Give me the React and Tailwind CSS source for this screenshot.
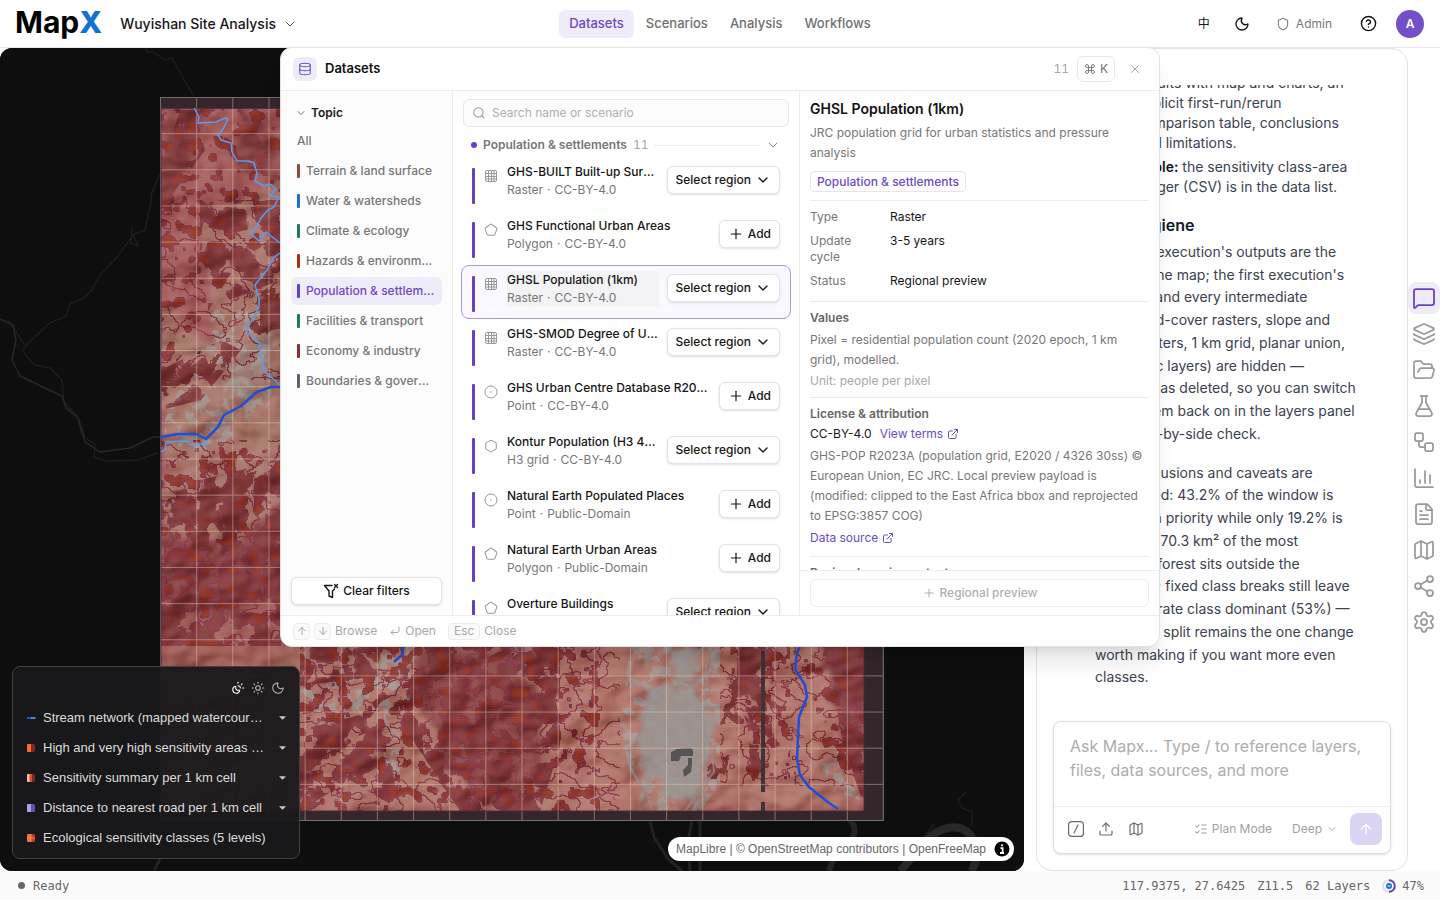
import React from "react";
import {
  ChevronDown, Database, Search, X, Moon, Shield, CircleHelp, Plus, Pentagon, Hexagon,
  ExternalLink, ArrowUp, ArrowDown, CornerDownLeft, MessageSquare, Layers, FolderOpen, FlaskConical, Workflow,
  BarChart3, FileText, Map as MapIcon, Share2, Settings, Upload, ListChecks, Sun, SunMoon, Command,
} from "lucide-react";

const TOPICS = [
  ["Terrain & land surface", "bg-[#8d4b42]"],
  ["Water & watersheds", "bg-[#1a6fd4]"],
  ["Climate & ecology", "bg-[#1f7a63]"],
  ["Hazards & environmental risk", "bg-[#9c3216]"],
  ["Population & settlements", "bg-[#6a3fc0]"],
  ["Facilities & transport", "bg-[#1f7a63]"],
  ["Economy & industry", "bg-[#84302c]"],
  ["Boundaries & governance", "bg-[#5b6070]"],
];

const DATASETS = [
  ["GHS-BUILT Built-up Surface", "Raster", "CC-BY-4.0", "grid", true],
  ["GHS Functional Urban Areas", "Polygon", "CC-BY-4.0", "poly", false],
  ["GHSL Population (1km)", "Raster", "CC-BY-4.0", "grid", true],
  ["GHS-SMOD Degree of Urbanisation", "Raster", "CC-BY-4.0", "grid", true],
  ["GHS Urban Centre Database R2024A", "Point", "CC-BY-4.0", "point", false],
  ["Kontur Population (H3 400m)", "H3 grid", "CC-BY-4.0", "hex", true],
  ["Natural Earth Populated Places", "Point", "Public-Domain", "point", false],
  ["Natural Earth Urban Areas", "Polygon", "Public-Domain", "poly", false],
  ["Overture Buildings", "Polygon", "ODbL-1.0", "poly", true],
];

const LEGEND = [
  ["Stream network (mapped watercour…", "stream", true],
  ["High and very high sensitivity areas …", "high", true],
  ["Sensitivity summary per 1 km cell", "summary", true],
  ["Distance to nearest road per 1 km cell", "distance", true],
  ["Ecological sensitivity classes (5 levels)", "classes", false],
];

const RAIL = [
  ["Layers", Layers], ["Files", FolderOpen], ["Lab", FlaskConical], ["Workflow", Workflow], ["Charts", BarChart3],
  ["Documents", FileText], ["Maps", MapIcon], ["Share", Share2], ["Settings", Settings],
];

function DatasetIcon({ kind }) {
  const cls = "size-[14px] text-[#999]";
  if (kind === "grid")
    return (
      <svg viewBox="0 0 14 14" className={cls} fill="none" stroke="currentColor" strokeWidth="1">
        <rect x="1.5" y="1.5" width="11" height="11" rx="1.5" />
        <path d="M4.5 1.5v11M7.5 1.5v11M10 1.5v11M1.5 4.5h11M1.5 7.5h11M1.5 10h11" />
      </svg>
    );
  if (kind === "poly") return <Pentagon className={cls} strokeWidth={1.75} />;
  if (kind === "hex") return <Hexagon className={cls} strokeWidth={1.75} />;
  return (
    <svg viewBox="0 0 14 14" className={cls} fill="none" stroke="currentColor">
      <circle cx="7" cy="7" r="6" />
      <circle cx="7" cy="7" r="0.8" fill="currentColor" stroke="none" />
    </svg>
  );
}

function Swatch({ kind }) {
  return (
    <svg viewBox="0 0 10 10" className="size-[10px] shrink-0">
      {kind === "stream" && <><path d="M1 5h5" stroke="#1d4fe0" strokeWidth="2" /><path d="M5 5h4.500" stroke="#5fa8f5" strokeWidth="1.500" /></>}
      {kind === "high" && <><rect x="1" y="1" width="8" height="8" rx="1.500" fill="#7c2a22" /><path d="M2 1h3v8H2a1 1 0 0 1-1-1V2a1 1 0 0 1 1-1z" fill="#fb6a32" /></>}
      {kind === "summary" && <><rect x="1" y="1" width="8" height="8" rx="1.500" fill="#7c2a22" /><path d="M3 1h3v8H3z" fill="#d8502a" /><path d="M2 1h1.500v8H2a1 1 0 0 1-1-1V2a1 1 0 0 1 1-1z" fill="#efc4b4" /></>}
      {kind === "distance" && <><rect x="1" y="1" width="8" height="8" rx="1.500" fill="#5f4fb0" /><path d="M2 1h3v8H2a1 1 0 0 1-1-1V2a1 1 0 0 1 1-1z" fill="#aaa2dc" /></>}
      {kind === "classes" && <><rect x="1" y="1" width="8" height="8" rx="1.500" fill="#c63d1c" /><path d="M2 1h3v8H2a1 1 0 0 1-1-1V2a1 1 0 0 1 1-1z" fill="#fb6a32" /><path d="M1 5h8M5 1v8" stroke="#e8b09a" strokeWidth="0.600" /></>}
    </svg>
  );
}

const STEP = 36.15;
const COLS = Array.from({ length: 21 }, (_, i) => 160.5 + i * STEP);
const ROWS = Array.from({ length: 21 }, (_, i) => 97.5 + i * STEP);

function MapCanvas() {
  return (
    <svg viewBox="0 48 1024 823" preserveAspectRatio="xMidYMid slice" className="block h-full w-full" aria-label="Map">
      <defs>
        <clipPath id="data"><rect x="161" y="108" width="703" height="703" /></clipPath>
        <filter id="relief" x="0" y="0" width="1" height="1" colorInterpolationFilters="sRGB">
          <feTurbulence type="fractalNoise" baseFrequency="0.018 0.024" numOctaves="3" seed="11" result="n" />
          <feDiffuseLighting in="n" surfaceScale="12" diffuseConstant="0.680" lightingColor="#ffffff">
            <feDistantLight azimuth="225" elevation="52" />
          </feDiffuseLighting>
        </filter>
        <filter id="soft" x="-0.2" y="-0.2" width="1.4" height="1.4" colorInterpolationFilters="sRGB">
          <feTurbulence type="fractalNoise" baseFrequency="0.04" numOctaves="4" seed="4" />
          <feDisplacementMap in="SourceGraphic" scale="34" xChannelSelector="R" yChannelSelector="G" />
          <feGaussianBlur stdDeviation="2.500" />
        </filter>
        <filter id="rough" x="-0.2" y="-0.2" width="1.4" height="1.4" colorInterpolationFilters="sRGB">
          <feTurbulence type="fractalNoise" baseFrequency="0.06" numOctaves="4" seed="21" />
          <feDisplacementMap in="SourceGraphic" scale="30" xChannelSelector="R" yChannelSelector="G" />
        </filter>
        <filter id="dense" x="0" y="0" width="1" height="1" colorInterpolationFilters="sRGB">
          <feTurbulence type="fractalNoise" baseFrequency="0.045 0.04" numOctaves="4" seed="8" />
          <feColorMatrix values="0 0 0 0 0  0 0 0 0 0  0 0 0 0 0  28 0 0 0 -13.800" result="t" />
          <feMorphology in="t" operator="dilate" radius="1" result="d" />
          <feComposite in="d" in2="t" operator="out" result="edge" />
          <feFlood floodColor="#7f3838" /><feComposite in2="t" operator="in" result="fill" />
          <feFlood floodColor="#7c2f40" /><feComposite in2="edge" operator="in" result="line" />
          <feMerge result="m"><feMergeNode in="fill" /><feMergeNode in="line" /></feMerge>
          <feComposite in="m" in2="SourceAlpha" operator="in" />
        </filter>
        <filter id="specks" x="0" y="0" width="1" height="1" colorInterpolationFilters="sRGB">
          <feTurbulence type="fractalNoise" baseFrequency="0.08" numOctaves="4" seed="31" />
          <feColorMatrix values="0 0 0 0 0  0 0 0 0 0  0 0 0 0 0  0 40 0 0 -25" result="t" />
          <feMorphology in="t" operator="dilate" radius="1" result="d" />
          <feComposite in="d" in2="t" operator="out" result="edge" />
          <feFlood floodColor="#8f3427" /><feComposite in2="t" operator="in" result="fill" />
          <feFlood floodColor="#7a3348" /><feComposite in2="edge" operator="in" result="line" />
          <feMerge result="m"><feMergeNode in="line" /><feMergeNode in="fill" /></feMerge>
          <feComposite in="m" in2="SourceAlpha" operator="in" />
        </filter>
        <filter id="contour" x="0" y="0" width="1" height="1" colorInterpolationFilters="sRGB">
          <feTurbulence type="fractalNoise" baseFrequency="0.035 0.045" numOctaves="5" seed="52" />
          <feColorMatrix values="0 0 0 0 0  0 0 0 0 0  0 0 0 0 0  0 0 60 0 -33" result="t" />
          <feMorphology in="t" operator="dilate" radius="0.6" result="d" />
          <feComposite in="d" in2="t" operator="out" result="edge" />
          <feFlood floodColor="#83313d" /><feComposite in2="edge" operator="in" result="line" />
          <feComposite in="line" in2="SourceAlpha" operator="in" />
        </filter>
        <filter id="haze" x="0" y="0" width="1" height="1" colorInterpolationFilters="sRGB">
          <feTurbulence type="fractalNoise" baseFrequency="0.09" numOctaves="4" seed="15" />
          <feColorMatrix values="0 0 0 0 0.620  0 0 0 0 0.590  0 0 0 0 0.570  0 0 9 0 -4.400" result="t" />
          <feComposite in="t" in2="SourceAlpha" operator="in" />
        </filter>
      </defs>

      <rect x="0" y="48" width="1024" height="823" fill="#0e0e0f" />
      <g fill="none" stroke="#1d1d1f" strokeWidth="1.500">
        <path d="M146 48l1 4h6l12 8 7-2 10 18 8 14 4 7M160 174l-8 18-1 10-6 28-12 5 5 11-7-3 1-15M131 238l-13 18-18 19-9 16-7 7-14 6-4 12-16 7-26 24 0 6 10 12 16 3 12 12 2 22 14 15 7 20 10 8-1 12 12 4 32-1 20-7M8 320l16 24" />
        <path d="M0 319l13 6 3 15-4 20 8 16 25 12 17 8 4 12 12 10 2 8 5 16 15 10 30-4 23-11h7" stroke="#28282a" />
        <path d="M154 871l6-12M650 821l4 16 14 22 14 12M692 821l-4 20 2 30M700 821l0 50" stroke="#222225" strokeWidth="3" />
        <path d="M842 813c12 8 16 16 10 26M833 860l-4 11" stroke="#242427" strokeWidth="6" />
        <path d="M900 871c16-16 24-36 44-42s30 6 32 20-2 14-4 22" stroke="#28282b" strokeWidth="8" />
        <path d="M926 834l8-10M966 792l-8 8 4 8 10 4 0 14" />
      </g>

      <rect x="160" y="97" width="723" height="724" fill="#34262a" />
      <g clipPath="url(#data)">
        <rect x="161" y="108" width="703" height="703" fill="#a25b59" />
        <g filter="url(#soft)">
          <path d="M205 220L300 170V560L161 530V300L210 340Z" fill="#a57266" />
          <path d="M280 640H560L590 811H300L280 760Z" fill="#aa7165" />
          <path d="M540 640H864V811H560Z" fill="#ad7267" />
          <path d="M161 600h60l80 40-60 60H161Z" fill="#9f5d57" />
          <path d="M161 530l60 20 60-40v80l-60 30-60-10Z" fill="#874243" />
          <path d="M400 650l100 0 40 60-10 100-60-10-50-100Z" fill="#8a4543" />
          <path d="M820 640h50v80l-20 50-16-60Z" fill="#823f40" />
          <path d="M161 140l30-32h20l-30 70-20 30Z" fill="#803a3a" />
          <path d="M230 110l50 20v60l-40-30Z" fill="#874142" />
        </g>
        <g filter="url(#soft)" fill="#9e9793">
          <path d="M255 300l12-6 4 80-30 26-14-6 24-50Z" opacity="0.400" />
        </g>
        <g filter="url(#haze)" opacity="0.800">
          <path d="M215 310h60v90l-60 50h-50v-30Z" />
          <path d="M630 645h90v140l-20 26h-60l-20-80Z" />
          <path d="M300 690l90-45h20v60l-90 20Z" />
          <path d="M400 650v130h-16V680ZM820 760l20-10 20 50-30-10Z" />
        </g>
        <g filter="url(#dense)">
          <path d="M161 480h40l80-20v186h-120ZM161 160l20-50h14l10 40-44 60ZM161 370l60-30 20 10-40 50-40 10Z" />
          <path d="M400 646h160v100l-20 65h-80l-60-90ZM300 646h100l-20 30-80 10ZM824 646h40v160l-20-60Z" />
          <path d="M738 646h34v140h-20l-4-60-12-30ZM200 200h80v80l-50 20-30-40ZM260 300h20v40h-20ZM300 730l80-20 20 100-50-30-50 31Z" />
        </g>
        <g filter="url(#contour)">
          <path d="M161 200h119v180H161ZM161 440h119v206H161ZM300 646h320v165H300ZM720 646h144v140H720Z" />
        </g>
        <g filter="url(#specks)">
          <path d="M161 108h119v130l-40 20-60 100-19 20ZM161 440h119v206H161Z" />
          <path d="M300 646h300v165H300ZM730 646h60v140h-50ZM800 650h64v160l-40-60Z" />
        </g>
        <g filter="url(#rough)" fill="#7a3432">
          <path d="M161 386l40-24 38-12-30 22-48 22ZM198 500l30-14 26-24 2 20-26 18-20 8v54l-14-20Z" />
          <path d="M260 300l20-10v24l-16 22-10-4Z" />
          <path d="M710 780l12-22 12-4-16 26ZM722 720l12-40 14 -10-12 50Z" />
        </g>
        <rect x="161" y="108" width="703" height="703" filter="url(#relief)" opacity="0.800" className="mix-blend-soft-light" />
        <g filter="url(#soft)" fill="#9b9795" opacity="0.850">
          <path d="M648 692l40-8 22 30-4 60-12 30-24-4-26-26-4-50Z" />
          <path d="M668 652l38-6-12 32-28-4Z" />
        </g>
        <g fill="#555457"><path d="M671 752l6-3 14 -1 2 2v6l-12 0-2 5h-8ZM688 758h4v6l-1 8-7 5-1-7 5-5ZM695 646l4 3 5-3Z" /></g>
        <g fill="none" stroke="#8f8f93" strokeWidth="2" opacity="0.700">
          <path d="M716 646l-10 40-4 36 10 30 2 20-14 18-14 20-2 7M712 646l-8 30-10 10h-30l-14 14-8 30-10 16-2 22 16 24 6 17M704 720l2 60-12 30" />
        </g>
        <path d="M763 651v141M763 802v9" stroke="#413236" strokeWidth="4" />
      </g>
      <g stroke="#ecd3bd" strokeWidth="1" opacity="0.440">
        {COLS.map((x) => <path key={x} d={`M${x} 97V821`} />)}
        {ROWS.map((y) => <path key={y} d={`M160 ${y}H883`} />)}
      </g>
      <path d="M160.500 97.500H883V820.500H160.500Z" fill="none" stroke="#6a6a72" opacity="0.700" />
      <path d="M161 108.500H864V811H161Z" fill="none" stroke="#3c2a4c" opacity="0.800" />
      <g fill="none" strokeLinejoin="round">
        <path d="M194 108l5 9-1 6 18-1 9-4 3 1-5 10-5 6 3 5 10 3 1 9 5 9h11l6 2 3 10-2 8 9 5 6-2 6 5-6 7 9 1-5 10-6 3-7 8-4 8-7 7 9 8 7-9 18 14M280 253l-6 4-7 13-12 15 4 14 0 8-13 24 13 12 5 28 16 14M161 452l4-3 1-7 20-1 5 4 10-1 4 1 2-6" stroke="#5a9df0" strokeWidth="1.500" />
        <path d="M161 437l17-3 18 0 10 5 12-12 6-12 17-9 16-14 14-5h10M404 646l-2 9-8 7M800 646l-3 7-2 16 10 16 2 12-8 20-2 42 3 16 9 12 20 16 9 6" stroke="#1f4fd8" strokeWidth="2.500" />
      </g>
    </svg>
  );
}

function Legend() {
  return (
    <section aria-label="Legend" className="absolute bottom-3 left-3 flex w-72 flex-col rounded-lg border border-[#414143] bg-[#19191b]/95 px-3 pt-3 pb-[5px] font-['Liberation_Sans',sans-serif] text-[13px] text-[#dcdcdc]">
      <div className="flex h-[18px] items-center justify-end gap-[6px] pr-[2px] text-[#b8b8b8]">
        <button aria-label="Auto theme" className="text-white"><SunMoon size={14} strokeWidth={1.75} /></button>
        <button aria-label="Light theme"><Sun size={14} strokeWidth={1.75} /></button>
        <button aria-label="Dark theme"><Moon size={14} strokeWidth={1.75} /></button>
      </div>
      <ul className="pt-[6px]">
        {LEGEND.map(([label, kind, more]) => (
          <li key={label} className="flex h-[30px] items-center gap-[7px] pl-[1px]">
            <Swatch kind={kind} />
            <span className="min-w-0 flex-1 whitespace-nowrap">{label}</span>
            {more && (
              <button aria-label={`Expand ${label}`} className="grid w-[10px] shrink-0 place-items-center">
                <svg viewBox="0 0 8 4" className="h-[4px] w-[7px]"><path d="M0 0h8L4 4z" fill="#c8c8c8" /></svg>
              </button>
            )}
          </li>
        ))}
      </ul>
    </section>
  );
}

function Header() {
  const nav = "flex h-7 items-center rounded-md px-[10px] text-[13px] font-medium";
  return (
    <header className="grid h-12 shrink-0 grid-cols-[1fr_auto_1fr] items-center border-b border-[#e6e6e6] bg-white">
      <div className="flex items-center gap-[18px] pl-[15px]">
        <a href="#home" className="pb-1 text-[30px] leading-none font-bold text-black">Map<span className="font-extrabold text-[#1470d2]">X</span></a>
        <button className="flex items-center gap-[6px] text-[14px] font-medium">
          Wuyishan Site Analysis <ChevronDown size={16} strokeWidth={1.5} className="text-[#555]" />
        </button>
      </div>
      <nav className="flex items-center gap-[2px]">
        <a href="#datasets" className={`${nav} bg-[#efecf9] text-[#6b4bc8]`}>Datasets</a>
        <a href="#scenarios" className={`${nav} text-[#707070]`}>Scenarios</a>
        <a href="#analysis" className={`${nav} text-[#707070]`}>Analysis</a>
        <a href="#workflows" className={`${nav} text-[#707070]`}>Workflows</a>
      </nav>
      <div className="flex items-center justify-end pr-4">
        <button aria-label="Language" className="grid size-8 place-items-center font-['Inter','Noto_Sans_CJK_SC',sans-serif] text-[12px]">中</button>
        <button aria-label="Theme" className="ml-[6px] grid size-8 place-items-center"><Moon size={16} strokeWidth={2} /></button>
        <button className="ml-[18px] flex items-center gap-[6px] text-[12px] text-[#777]"><Shield size={14} strokeWidth={1.75} />Admin</button>
        <button aria-label="Help" className="ml-5 grid size-8 place-items-center"><CircleHelp size={17} strokeWidth={2} /></button>
        <button aria-label="Account" className="ml-3 grid size-7 place-items-center rounded-full bg-[#7450c8] text-[12px] font-semibold text-white">A</button>
      </div>
    </header>
  );
}

const softBtn = "flex h-7 items-center rounded-md border border-[#e3e3e3] bg-white text-[12px] font-medium text-[#161616] shadow-sm";

function DatasetsDialog() {
  return (
    <section role="dialog" aria-label="Datasets" className="flex h-[600px] w-[880px] flex-col overflow-hidden rounded-xl border border-[#e2e2e2] bg-white text-[12px] shadow-xl">
      <div className="flex h-[43px] shrink-0 items-center border-b border-[#ececec] px-3">
        <span className="grid size-6 place-items-center rounded-md bg-[#efecf9] text-[#6b4bc8]"><Database size={14} strokeWidth={1.75} /></span>
        <h2 className="ml-2 flex-1 text-[13px] font-semibold text-[#111]">Datasets</h2>
        <span className="text-[#a8a8a8] tabular-nums">11</span>
        <kbd className="ml-2 flex h-[26px] items-center gap-1 rounded-md border border-[#e6e6e6] px-[6px] font-['Inter',sans-serif] text-[12px] text-[#707070]"><Command size={12} strokeWidth={1.75} />K</kbd>
        <button aria-label="Close" className="ml-3 grid size-4 place-items-center text-[#999]"><X size={14} strokeWidth={1.5} /></button>
        <span className="w-1" />
      </div>

      <div className="flex min-h-0 flex-1">
        <aside className="flex w-[172px] shrink-0 flex-col border-r border-[#ececec] bg-[#fcfcfc] px-[10px] pt-2 pb-[10px]">
          <button className="flex h-7 items-center gap-[4px] pl-1 text-[12px] font-semibold text-[#1a1a1a]"><ChevronDown size={12} strokeWidth={1.75} className="text-[#666]" />Topic</button>
          <ul className="flex flex-col gap-[2px] font-medium text-[#777]">
            <li><button className="flex h-7 w-full items-center pl-[6px]">All</button></li>
            {TOPICS.map(([label, bar]) => (
              <li key={label}>
                <button className={`flex h-7 w-full items-center gap-[6px] rounded-md px-[6px] ${label.startsWith("Population") ? "bg-[#efecf9] text-[#6b4bc8]" : ""}`}>
                  <span className={`h-[14px] w-[3px] shrink-0 rounded-[1px] ${bar}`} />
                  <span className="truncate">{label}</span>
                </button>
              </li>
            ))}
          </ul>
          <button className={`${softBtn} mt-auto justify-center gap-1`}>
            <svg viewBox="0 0 16 16" className="size-4" fill="none" stroke="currentColor" strokeWidth="1.400" strokeLinecap="round" strokeLinejoin="round">
              <path d="M9 2.500H1.500L6 8v5l3.500 1.500V8l2-2M11.500 1.500l3 3M14.500 1.500l-3 3" />
            </svg>
            Clear filters
          </button>
        </aside>

        <div className="flex min-w-0 flex-1 flex-col overflow-hidden pt-2">
          <label className="mx-[10px] flex h-7 shrink-0 items-center gap-[6px] rounded-md border border-[#e6e6e6] bg-[#fcfcfc] px-2">
            <Search size={14} strokeWidth={1.75} className="text-[#999]" />
            <input aria-label="Search datasets" placeholder="Search name or scenario" className="min-w-0 flex-1 bg-transparent text-[12px] outline-none placeholder:text-[#b0b0b0]" />
          </label>
          <div className="mt-2 flex h-5 shrink-0 items-center pr-[18px] pl-[18px] font-semibold text-[#777]">
            <span className="size-[6px] rounded-full bg-[#6a3fc0]" />
            <h3 className="ml-[6px]">Population &amp; settlements</h3>
            <span className="ml-[6px] font-normal text-[#a8a8a8] tabular-nums">11</span>
            <span className="mx-[6px] h-px flex-1 bg-[#ececec]" />
            <ChevronDown size={16} strokeWidth={1.5} className="text-[#888]" />
          </div>
          <ul className="mx-2 mt-[2px]">
            {DATASETS.map(([title, type, license, kind, region], i) => (
              <li key={title} className={`flex h-[54px] rounded-lg border px-[10px] ${i === 2 ? "border-[#a896de] bg-[#faf8ff]" : "border-transparent"}`}>
                <span className="mt-[10px] h-9 w-[3px] shrink-0 rounded-[1px] bg-[#6a3fc0]" />
                <span className="mt-[11px] ml-[9px] shrink-0"><DatasetIcon kind={kind} /></span>
                <button className={`mt-[5px] ml-[9px] flex h-9 min-w-0 flex-1 flex-col rounded-sm text-left text-[12px] leading-[18px] ${i === 2 ? "bg-[#f3f2f4]" : ""}`}>
                  <span className="w-full truncate font-medium text-[#161616]">{title}</span>
                  <span className="flex gap-1 text-[#777]"><span>{type}</span><span>·</span><span>{license}</span></span>
                </button>
                {region ? (
                  <button className={`${softBtn} mt-2 ml-2 shrink-0 gap-1 px-2`}>Select region<ChevronDown size={16} strokeWidth={2} /></button>
                ) : (
                  <button className={`${softBtn} mt-2 ml-2 shrink-0 gap-1 px-2`}><Plus size={16} strokeWidth={1.75} />Add</button>
                )}
              </li>
            ))}
          </ul>
        </div>

        <div className="flex w-[360px] shrink-0 flex-col border-l border-[#ececec]">
          <div className="min-h-0 flex-1 overflow-hidden pr-[10px] pl-[10px]">
            <h2 className="mt-2 text-[14px] leading-5 font-semibold text-[#111]">GHSL Population (1km)</h2>
            <p className="mt-1 leading-5 text-[#777]">JRC population grid for urban statistics and pressure analysis</p>
            <span className="mt-2 flex h-[21px] w-fit items-center rounded border border-[#e6e6e6] px-[6px] text-[12px] font-medium text-[#6b4bc8]">Population &amp; settlements</span>
            <dl className="mt-2 grid grid-cols-[64px_1fr] gap-x-4 gap-y-2 border-t border-[#ececec] pt-2 pb-3 leading-4 text-[#161616]">
              <dt className="text-[#777]">Type</dt><dd>Raster</dd>
              <dt className="text-[#777]">Update cycle</dt><dd>3-5 years</dd>
              <dt className="text-[#777]">Status</dt><dd>Regional preview</dd>
            </dl>
            <div className="border-t border-[#ececec] pt-[6px] pb-[6px] leading-5 text-[#777]">
              <h3 className="font-semibold text-[#666]">Values</h3>
              <p className="mt-[2px]">Pixel = residential population count (2020 epoch, 1 km grid), modelled.</p>
              <p className="mt-px text-[#a8a8a8]">Unit: people per pixel</p>
            </div>
            <div className="border-t border-[#ececec] pt-[6px] pb-2 leading-5 text-[#777]">
              <h3 className="font-semibold text-[#666]">License &amp; attribution</h3>
              <p className="flex items-center gap-2 text-[#161616]">CC-BY-4.0 <a href="#terms" className="flex items-center gap-1 text-[#6b4bc8]">View terms <ExternalLink size={12} strokeWidth={2} /></a></p>
              <p className="mt-[2px]">GHS-POP R2023A (population grid, E2020 / 4326 30ss) © European Union, EC JRC. Local preview payload is (modified: clipped to the East Africa bbox and reprojected to EPSG:3857 COG)</p>
              <a href="#source" className="mt-[2px] flex items-center gap-1 text-[#6b4bc8]">Data source <ExternalLink size={12} strokeWidth={2} /></a>
            </div>
            <div className="border-t border-[#ececec] pt-[6px] leading-5">
              <h3 className="font-semibold text-[#666]">Regional preview extent</h3>
            </div>
          </div>
          <div className="shrink-0 border-t border-[#ececec] px-[10px] pt-2 pb-2">
            <button disabled className="flex h-7 w-full items-center justify-center gap-1 rounded-md border border-[#ececec] font-medium text-[#b0b0b0]"><Plus size={14} strokeWidth={1.75} />Regional preview</button>
          </div>
        </div>
      </div>

      <div className="flex h-[31px] shrink-0 items-center border-t border-[#ececec] px-3 text-[#a8a8a8]">
        <kbd className="grid size-[17px] place-items-center rounded border border-[#ebebeb] bg-[#fafafa]"><ArrowUp size={12} /></kbd>
        <kbd className="ml-1 grid size-[17px] place-items-center rounded border border-[#ebebeb] bg-[#fafafa]"><ArrowDown size={12} /></kbd>
        <span className="ml-1">Browse</span>
        <CornerDownLeft size={12} className="ml-3" />
        <span className="ml-1">Open</span>
        <kbd className="ml-3 flex h-[17px] items-center rounded border border-[#ebebeb] bg-[#fafafa] px-[5px] font-['Inter',sans-serif] text-[12px]">Esc</kbd>
        <span className="ml-1">Close</span>
      </div>
    </section>
  );
}

const PARA_1 = ["The final execution's outputs are the", "ones on the map; the first execution's", "datasets and every intermediate", "layer (land-cover rasters, slope and", "zone clusters, 1 km grid, planar union,", "diagnostic layers) are hidden —", "nothing was deleted, so you can switch", "any of them back on in the layers panel", "for a side-by-side check."];
const PARA_2 = ["The conclusions and caveats are", "unchanged: 43.2% of the window is", "rated high priority while only 19.2% is", "low while 70.3 km² of the most", "sensitive forest sits outside the", "the parks; fixed class breaks still leave", "the moderate class dominant (53%) —", "a quantile split remains the one change", "worth making if you want more even", "classes."];

const lines = (rows) => rows.map((row) => <span key={row} className="block whitespace-nowrap">{row}</span>);

function Chat() {
  return (
    <aside className="flex w-[372px] shrink-0 flex-col rounded-2xl border border-[#e3e3e3] bg-white">
      <div className="mt-9 flex min-h-0 flex-1 flex-col justify-end overflow-hidden pl-[58px] text-[14px] text-[#3b4250]">
        <ul className="pl-[42px] leading-5">
          <li>{lines(["results with map and charts, an", "explicit first-run/rerun", "comparison table, conclusions", "and limitations."])}</li>
          <li className="mt-1">
            <span className="block whitespace-nowrap"><b className="font-semibold text-[#111827]">Table:</b> the sensitivity class-area</span>
            <span className="block whitespace-nowrap">ledger (CSV) is in the data list.</span>
          </li>
        </ul>
        <h3 className="mt-4 text-[16px] leading-6 font-semibold text-[#111827]">Map hygiene</h3>
        <p className="mt-1 leading-relaxed">{lines(PARA_1)}</p>
        <p className="mt-4 mb-4 leading-relaxed">{lines(PARA_2)}</p>
      </div>
      <form className="m-4 flex flex-col rounded-lg border border-[#dedede] bg-white shadow-sm" onSubmit={(e) => e.preventDefault()}>
        <textarea aria-label="Message" rows={2} placeholder="Ask Mapx... Type / to reference layers, files, data sources, and more" className="h-[84px] resize-none px-4 pt-3 text-[16px] leading-6 outline-none placeholder:text-[#adadad]" />
        <div className="flex h-[47px] items-center border-t border-[#ededed] pr-2 pb-[2px] pl-[14px] text-[12px] text-[#a0a0a0]">
          <button type="button" aria-label="Commands" className="text-[#6a6a6a]">
            <svg viewBox="0 0 16 16" className="size-4" fill="none" stroke="currentColor" strokeWidth="1.200" strokeLinecap="round"><rect x="0.600" y="0.600" width="14.800" height="14.800" rx="3" /><path d="M6 12l4-8" /></svg>
          </button>
          <button type="button" aria-label="Upload" className="ml-[14px] text-[#6a6a6a]"><Upload size={16} strokeWidth={1.75} /></button>
          <button type="button" aria-label="Map reference" className="ml-[14px] text-[#6a6a6a]"><MapIcon size={16} strokeWidth={1.75} /></button>
          <button type="button" className="ml-auto flex items-center gap-1"><ListChecks size={14} strokeWidth={1.75} />Plan Mode</button>
          <button type="button" className="ml-5 flex items-center gap-1">Deep<ChevronDown size={12} strokeWidth={1.75} /></button>
          <button aria-label="Send" className="ml-3 grid size-8 place-items-center rounded-lg bg-[#dbd4f2] text-white"><ArrowUp size={16} /></button>
        </div>
      </form>
    </aside>
  );
}

export default function App() {
  return (
    <div className="relative flex h-screen flex-col overflow-hidden bg-white font-['Inter','Noto_Sans_CJK_SC',sans-serif] text-[#161616]">
      <Header />
      <main className="flex min-h-0 flex-1">
        <section className="relative mr-3 min-w-0 flex-1 overflow-hidden rounded-xl bg-[#0e0e0f]">
          <MapCanvas />
          <Legend />
          <div className="absolute right-[10px] bottom-[10px] flex h-6 items-center gap-2 rounded-full bg-white pr-1 pl-2 font-['Liberation_Sans',sans-serif] text-[12px] text-[#666]">
            <span><a href="#maplibre">MapLibre</a> | <a href="#osm">© OpenStreetMap contributors</a> | <a href="#ofm">OpenFreeMap</a></span>
            <button aria-label="Toggle attribution" className="grid size-4 place-items-center">
              <svg viewBox="0 0 16 16" className="size-4"><circle cx="8" cy="8" r="7.500" fill="#000" /><path d="M8 3.200v2M6.500 7.200H8.600V12M6 12h4" stroke="#fff" strokeWidth="1.800" fill="none" /></svg>
            </button>
          </div>
        </section>
        <Chat />
        <nav aria-label="Panels" className="flex w-8 shrink-0 flex-col items-center justify-center gap-1 text-[#9a9a9a]">
          <button aria-label="Chat" className="grid size-8 place-items-center rounded-lg bg-[#efecf9] text-[#6a3fc0]"><MessageSquare size={24} strokeWidth={1.75} /></button>
          {RAIL.map(([label, Icon]) => (
            <button key={label} aria-label={label} className="grid size-8 place-items-center"><Icon size={24} strokeWidth={1.75} /></button>
          ))}
        </nav>
      </main>
      <footer className="flex h-[29px] shrink-0 items-center bg-[#fbfbfb] pr-4 pl-[18px] font-['DejaVu_Sans_Mono',monospace] text-[12px] text-[#666]">
        <span className="mr-2 size-[7px] rounded-full bg-[#666]" />Ready
        <span className="ml-auto">117.9375, 27.6425</span>
        <span className="ml-3">Z11.5</span>
        <span className="ml-3">62 Layers</span>
        <svg viewBox="0 0 14 14" className="ml-3 size-[14px]" fill="none"><circle cx="7" cy="7" r="5.800" stroke="#dddde6" strokeWidth="2" /><path d="M7 1.200a5.800 5.800 0 0 1 0 11.600" stroke="#6a3fc0" strokeWidth="2" /><circle cx="7" cy="7" r="3" fill="#1c6fd6" /><path d="M5.500 7h3" stroke="#fff" /></svg>
        <span className="ml-[6px]">47%</span>
      </footer>
      <div className="pointer-events-none absolute inset-x-0 top-[47px] flex justify-center">
        <div className="pointer-events-auto"><DatasetsDialog /></div>
      </div>
    </div>
  );
}
